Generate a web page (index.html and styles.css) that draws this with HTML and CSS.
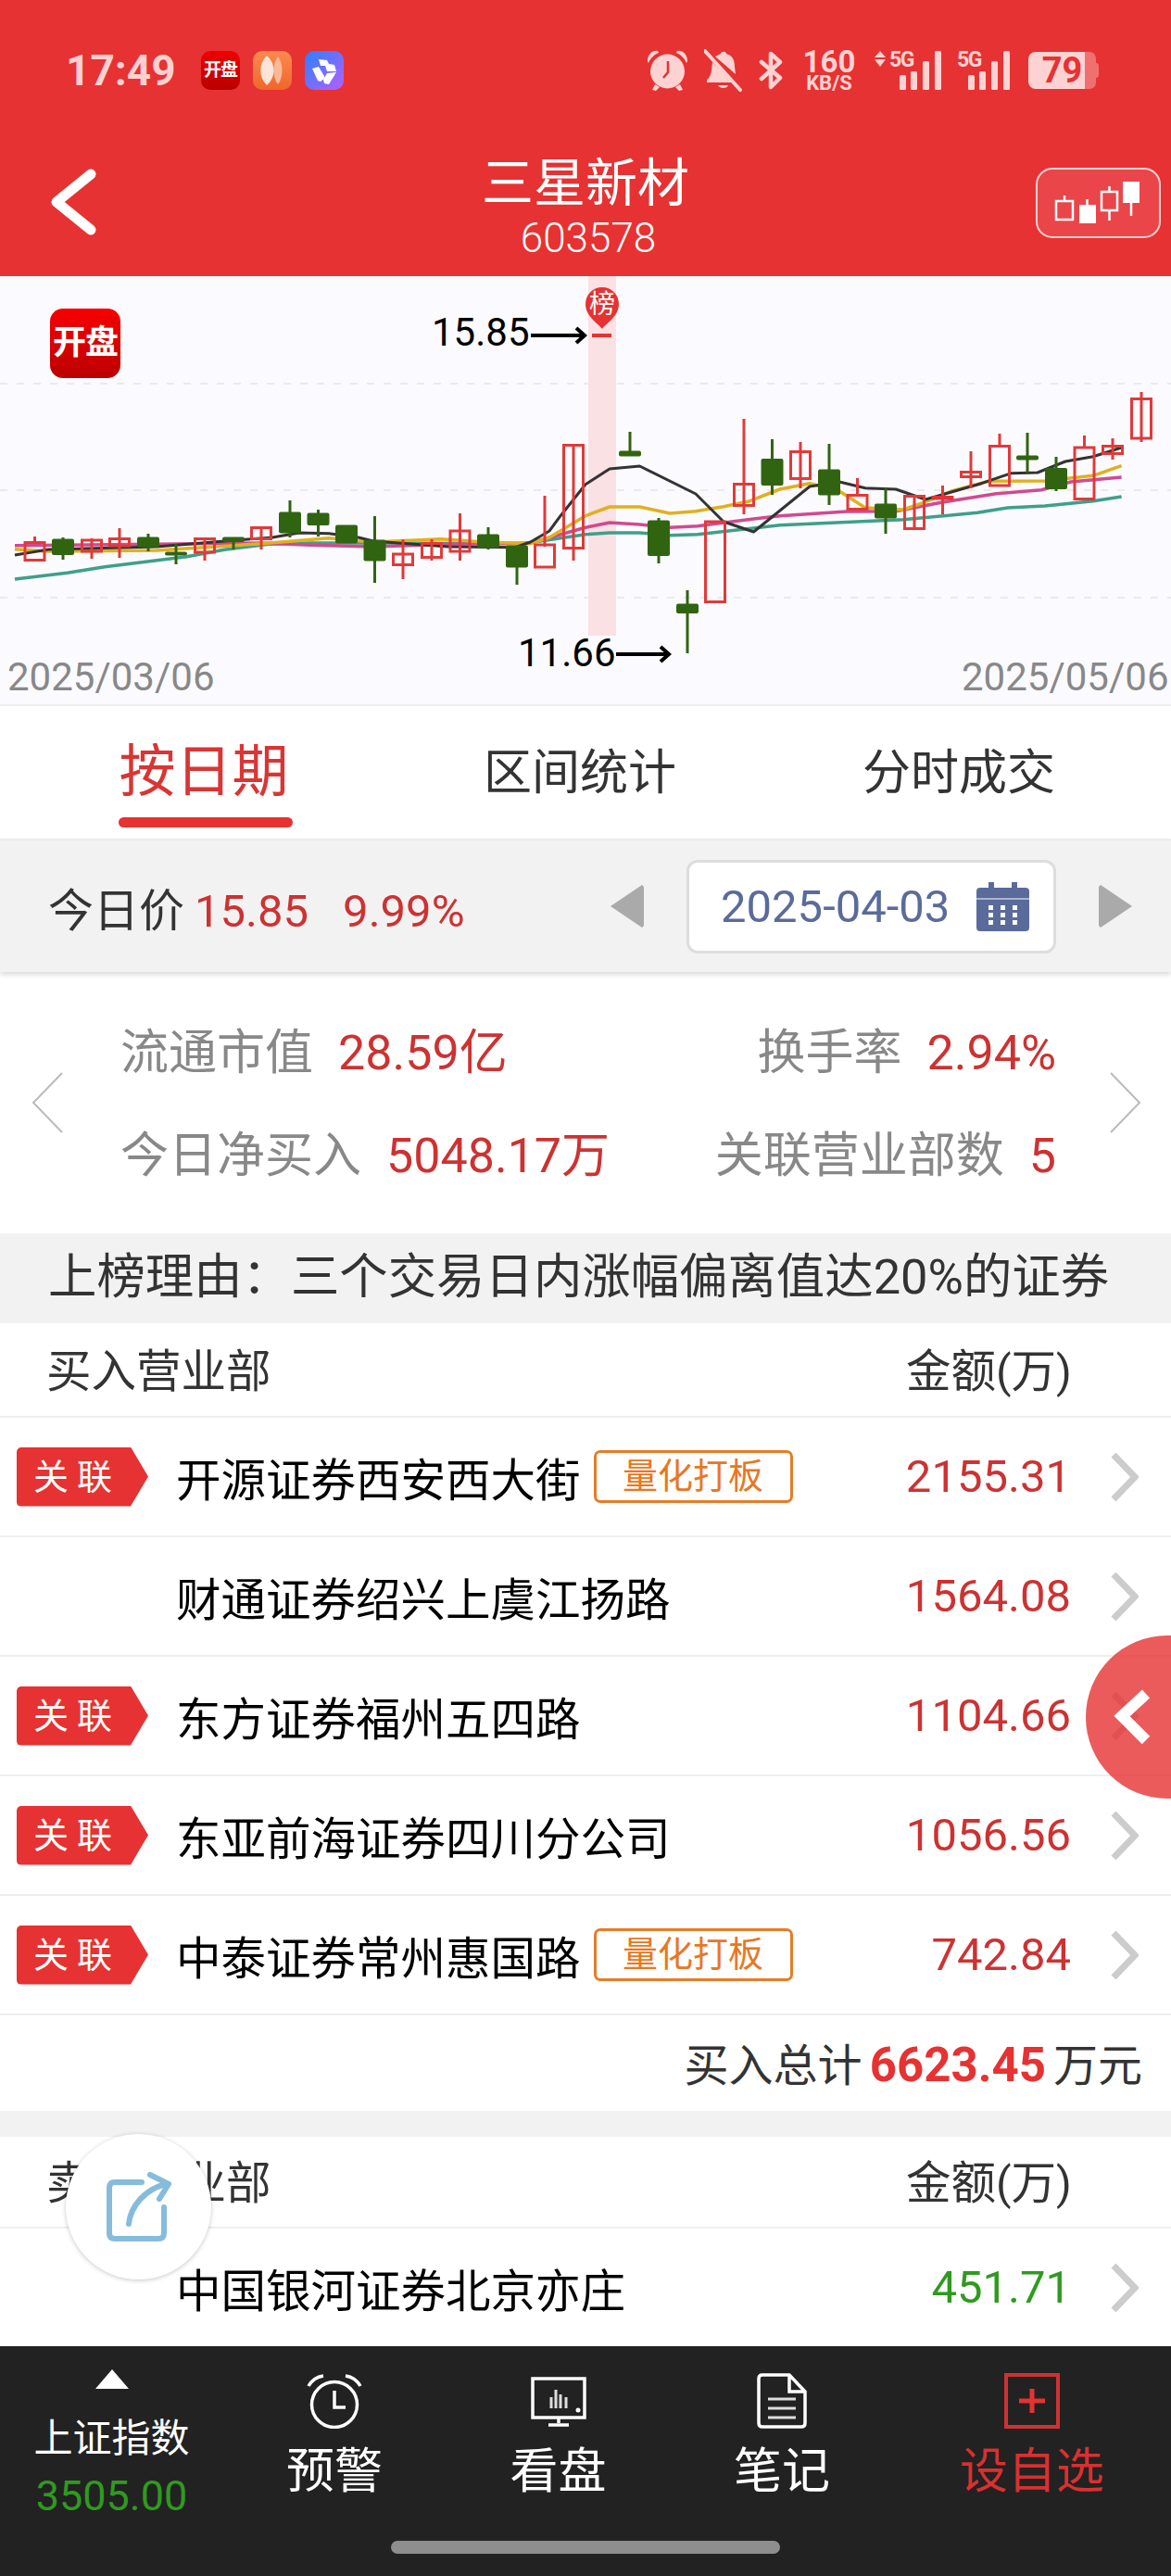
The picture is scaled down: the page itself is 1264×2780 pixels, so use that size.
FILE: index.html
```html
<!DOCTYPE html>
<html lang="zh">
<head>
<meta charset="utf-8">
<title>三星新材</title>
<link rel="stylesheet" href="styles.css">
</head>
<body>
<div class="page">
  <header class="header">
    <div class="status">
      <span class="time">17:49</span>
      <div class="app-icons">
        <span class="app app-kp">开盘</span>
        <span class="app app-orange">
          <svg width="42" height="42" viewBox="0 0 42 42"><path class="petal-b" d="M27 6C33 13 33 29 27 36C21 29 21 13 27 6Z"/><path class="petal-a" d="M15 5C25 14 25 28 15 37C6 28 6 14 15 5Z"/></svg>
        </span>
        <span class="app app-blue">
          <svg width="42" height="42" viewBox="0 0 42 42"><path class="star" d="M15 9L24 10L26 14L32 15L34 22H24L22 16H17Z"/><path class="star" d="M8 19L15 17L22 29L17 33L14 32Z"/><path class="star" d="M24 24L34 23L26 36L21 35L20 31Z"/></svg>
        </span>
      </div>
      <div class="sys-icons">
        <svg class="ic-alarm" width="45" height="46" viewBox="0 0 45 46"><path class="st-fill" d="M1 13C1 6 6 1 12 2L13 4C8 6 4 10 2 15Z"/><path class="st-fill" d="M44 13C44 6 39 1 33 2L32 4C37 6 41 10 43 15Z"/><circle class="st-fill" cx="22.5" cy="24" r="18.5"/><path class="st-fill" d="M9 38L6 44L10 45L14 41Z"/><path class="st-fill" d="M36 38L39 44L35 45L31 41Z"/><path class="st-hand" d="M23 13V25L18 31"/></svg>
        <svg class="ic-bell" width="42" height="46" viewBox="0 0 42 46"><path class="st-fill" d="M18 5C18 2 24 2 24 5C31 7 33 12 33 19L34 27L12 8C14 7 16 6 18 5Z"/><path class="st-fill" d="M9 14L31 36H3V33C8 30 8 22 9 14Z"/><path class="st-fill" d="M15 39H26C25 43 17 43 15 39Z"/><path class="st-slash" d="M1 2L39 44"/></svg>
        <svg class="ic-bt" width="28" height="46" viewBox="0 0 28 46"><path class="st-line" d="M3 14L23 31L13 41V5L23 14L3 32"/></svg>
        <div class="speed"><span class="speed-num">160</span><span class="speed-unit">KB/S</span></div>
        <svg class="ic-sig1" width="72" height="52" viewBox="0 -8 72 52"><path class="st-fill" d="M6 1L12 8H0Z"/><path class="st-fill" d="M0 10H12L6 18Z"/><text class="st-5g" x="16" y="18">5G</text><rect class="st-fill" x="27" y="27" width="7" height="16" rx="1.5"/><rect class="st-fill" x="39" y="23" width="7" height="20" rx="1.5"/><rect class="st-fill" x="52" y="12" width="7" height="31" rx="1.5"/><rect class="st-fill" x="65" y="1" width="7" height="42" rx="1.5"/></svg>
        <svg class="ic-sig2" width="58" height="52" viewBox="0 -8 58 52"><text class="st-5g" x="0" y="18">5G</text><rect class="st-fill" x="12" y="27" width="7" height="16" rx="1.5"/><rect class="st-fill" x="24" y="23" width="7" height="20" rx="1.5"/><rect class="st-fill" x="37" y="12" width="7" height="31" rx="1.5"/><rect class="st-fill" x="50" y="1" width="7" height="42" rx="1.5"/></svg>
        <div class="battery"><span class="batt-num">79</span><span class="batt-rest"></span><span class="batt-nub"></span></div>
      </div>
    </div>
    <div class="titlebar">
      <svg class="back" width="50" height="72" viewBox="0 0 50 72"><path d="M44 6L7 36L44 66"/></svg>
      <div class="title-block">
        <div class="title">三星新材</div>
        <div class="code">603578</div>
      </div>
      <div class="kbtn">
        <svg width="131" height="72" viewBox="0 0 131 72"><path class="k-line" d="M20 34H38V54H20ZM29 34V28M53.500 32V38M69 24H86V44H69ZM77.500 24V18M77.500 44V55M101 36V50"/><rect class="k-solid" x="45" y="38" width="18" height="20"/><rect class="k-solid" x="92" y="13" width="18" height="23"/></svg>
      </div>
    </div>
  </header>

  <section class="chart">
    <svg class="chart-svg" width="1264" height="462" viewBox="0 298 1264 462">
      <path class="grid" d="M0 414H1264M0 529H1264M0 645H1264"/>
      <rect class="band" x="635" y="298" width="30" height="388"/>
      <polyline class="ma ma-teal" points="16,625 72.600,618.300 113,611.700 201.600,600.700 242,593.300 290,587.300 335,586 403,586 564.500,586.700 632,576.700 658,575 690.500,575 723,577.700 753,576.700 841.700,566.700 975,560.700 1055,553.300 1087.600,548 1128,546 1180,540.700 1210.600,536"/>
      <polyline class="ma ma-pink" points="16,588.700 169,587.300 282,586 335,588.300 403,590 484,587.300 572.600,586 632,569.300 658,564 690.500,566 723,569.300 753,567.700 813.500,560 841.700,556.700 914,552 967,551.700 1019,541.700 1075.500,532.700 1124,528.700 1156,520 1210.600,515"/>
      <polyline class="ma ma-yellow" points="16,592.700 52,595 169,594 282,586.700 355,580.700 403,585 476,581.700 524,585 572.600,586.700 593,580 632,556.700 658,547 690.500,547 723,554 751,551.700 781,546.700 809.400,540.700 841.700,528 874,521.700 906,530 934,548 975,550 999,541.700 1027,530 1067.500,519.300 1128,519 1180,513.300 1210.600,502.700"/>
      <polyline class="ma ma-black" points="16,599 52,593 169,590 242,584 294,580 323,575 355,575.700 387,580 403,584 484,590 556,590.700 572.600,585 593,573 605,556.700 632,522.700 658,506 690.500,503 751,533 781,563 813.500,574 874,525 906,520 934,526.700 967,528 999,539 1059.400,521.700 1091.700,510.700 1120,510 1150,498 1180,492.700 1210.600,483"/>
      <path class="wick-r" d="M37.500 579V585M99 581V603M129 570V602M221 580V605M282 568V593M435 582V625M466 582V605M496.500 554V605M588 535V590M619 479V605M803 452V555M864 477V527M925.500 516V535M987 534V572M1017.500 524V555M1048 487V527M1079 468V482M1170.500 470V483M1201 473V496M1232 423V477"/>
      <path class="wick-g" d="M68 580V604M160 576V595M190 587V609M252 580V593M313 540V580M343.500 550V579M404.500 557V629M527 569V593M558 589V631M680 466V488M711 559V608M742 637V705M833.500 474V534M895 479V545M956 527V576M1109 467V510M1140 493V530"/>
      <g class="body-r">
        <rect x="27" y="585.500" width="21" height="19"/><rect x="88.500" y="583" width="21" height="12"/><rect x="118.500" y="581.500" width="21" height="7.500"/><rect x="210.500" y="581.500" width="21" height="14.500"/><rect x="271.500" y="569.500" width="21" height="12"/><rect x="424.500" y="598" width="21" height="11.500"/><rect x="455.500" y="586.500" width="21" height="15"/><rect x="486" y="573" width="21" height="22"/><rect x="577.500" y="588" width="21" height="24"/><rect x="608.500" y="480.500" width="21" height="111"/>
        <rect x="761.500" y="563" width="21" height="86.500"/><rect x="792.500" y="522.500" width="21" height="23"/><rect x="853.500" y="487.500" width="21" height="29"/><rect x="915" y="534.500" width="21" height="15"/><rect x="976.500" y="535.500" width="21" height="35"/><rect x="1037.500" y="509.500" width="21" height="5"/><rect x="1068.500" y="481.500" width="21" height="42.500"/><rect x="1160" y="483" width="21" height="55.500"/><rect x="1190.500" y="481.500" width="21" height="8"/><rect x="1221.500" y="430.500" width="21" height="42.500"/>
      </g>
      <g class="body-g">
        <rect x="56" y="581.500" width="24" height="17.500" rx="2"/><rect x="148" y="579.500" width="24" height="11" rx="2"/><rect x="178" y="595.500" width="24" height="4" rx="2"/><rect x="240" y="579.500" width="24" height="5.500" rx="2"/><rect x="301" y="552.500" width="24" height="23" rx="2"/><rect x="331.500" y="553.500" width="24" height="13.500" rx="2"/><rect x="362" y="566.500" width="24" height="20" rx="2"/><rect x="392.500" y="582.500" width="24" height="23" rx="2"/><rect x="515" y="576.500" width="24" height="15" rx="2"/><rect x="546" y="588.500" width="24" height="24" rx="2"/>
        <rect x="668" y="486.500" width="24" height="6" rx="2"/><rect x="699" y="561.500" width="24" height="38.500" rx="2"/><rect x="730" y="651.500" width="24" height="10.500" rx="2"/><rect x="821.500" y="495" width="24" height="29" rx="2"/><rect x="883" y="506.500" width="24" height="28" rx="2"/><rect x="944" y="543.500" width="24" height="16" rx="2"/><rect x="1097" y="491.500" width="24" height="5" rx="2"/><rect x="1128" y="505" width="24" height="23" rx="2"/>
      </g>
      <rect class="flat-r" x="1005.500" y="535" width="24" height="4.500" rx="1"/>
      <rect class="flat-r" x="639" y="360" width="21" height="4"/>
      <path class="pin" d="M650 355C646 349 632 342 632 328A18 18 0 0 1 668 328C668 342 654 349 650 355Z"/>
      <text class="pin-text" x="650" y="338">榜</text>
      <text class="price-text" x="466" y="373">15.85</text>
      <path class="arrow" d="M573 362H631M622 354L631 362L622 370"/>
      <text class="price-text" x="559" y="719">11.66</text>
      <path class="arrow" d="M665 706H722M713 698L722 706L713 714"/>
      <text class="axis-text" x="8" y="745">2025/03/06</text>
      <text class="axis-text" x="1038" y="745">2025/05/06</text>
    </svg>
    <div class="chart-logo">开盘</div>
  </section>

  <nav class="tabs">
    <div class="tab tab-on">按日期</div>
    <div class="tab">区间统计</div>
    <div class="tab">分时成交</div>
  </nav>

  <section class="pricebar">
    <div class="today"><span class="today-label">今日价</span><span class="red today-val">15.85</span><span class="red today-pct">9.99%</span></div>
    <div class="picker">
      <svg class="tri" width="36" height="46" viewBox="0 0 36 46"><path d="M36 2V44L34 46L0 23L34 0Z"/></svg>
      <div class="datebox">
        <span class="date">2025-04-03</span>
        <svg width="57" height="53" viewBox="0 0 57 53"><rect class="cal" x="0" y="6" width="57" height="47" rx="4"/><path class="cal-line" d="M0 18H57"/><rect class="cal" x="13" y="0" width="6" height="15"/><rect class="cal" x="38" y="0" width="6" height="15"/><g class="cal-dots"><rect x="13" y="25" width="5" height="5"/><rect x="26" y="25" width="5" height="5"/><rect x="39" y="25" width="5" height="5"/><rect x="13" y="33" width="5" height="5"/><rect x="26" y="33" width="5" height="5"/><rect x="39" y="33" width="5" height="5"/><rect x="13" y="41" width="5" height="5"/><rect x="26" y="41" width="5" height="5"/><rect x="39" y="41" width="5" height="5"/></g></svg>
      </div>
      <svg class="tri" width="36" height="46" viewBox="0 0 36 46"><path d="M0 2V44L2 46L36 23L2 0Z"/></svg>
    </div>
  </section>

  <section class="stats">
    <svg class="thin" width="34" height="66" viewBox="0 0 34 66"><path d="M33 1L2 33L33 65"/></svg>
    <div class="stat-grid">
      <div class="stat-row">
        <div class="stat"><span class="stat-label">流通市值</span><span class="red">28.59亿</span></div>
        <div class="stat"><span class="stat-label">换手率</span><span class="red">2.94%</span></div>
      </div>
      <div class="stat-row">
        <div class="stat"><span class="stat-label">今日净买入</span><span class="red">5048.17万</span></div>
        <div class="stat"><span class="stat-label">关联营业部数</span><span class="red">5</span></div>
      </div>
    </div>
    <svg class="thin" width="34" height="66" viewBox="0 0 34 66"><path d="M1 1L32 33L1 65"/></svg>
  </section>

  <div class="reason">上榜理由：三个交易日内涨幅偏离值达20%的证券</div>

  <div class="thead"><span>买入营业部</span><span>金额(万)</span></div>
  <div class="row">
    <span class="rel">关联</span><span class="name">开源证券西安西大街</span><span class="qtag">量化打板</span><span class="amt red">2155.31</span>
    <svg class="more" width="30" height="52" viewBox="0 0 30 52"><path d="M3 2L26 26L3 50"/></svg>
  </div>
  <div class="row">
    <span class="rel rel-none"></span><span class="name">财通证券绍兴上虞江扬路</span><span class="amt red">1564.08</span>
    <svg class="more" width="30" height="52" viewBox="0 0 30 52"><path d="M3 2L26 26L3 50"/></svg>
  </div>
  <div class="row">
    <span class="rel">关联</span><span class="name">东方证券福州五四路</span><span class="amt red">1104.66</span>
    <svg class="more" width="30" height="52" viewBox="0 0 30 52"><path d="M3 2L26 26L3 50"/></svg>
  </div>
  <div class="row">
    <span class="rel">关联</span><span class="name">东亚前海证券四川分公司</span><span class="amt red">1056.56</span>
    <svg class="more" width="30" height="52" viewBox="0 0 30 52"><path d="M3 2L26 26L3 50"/></svg>
  </div>
  <div class="row">
    <span class="rel">关联</span><span class="name">中泰证券常州惠国路</span><span class="qtag">量化打板</span><span class="amt red">742.84</span>
    <svg class="more" width="30" height="52" viewBox="0 0 30 52"><path d="M3 2L26 26L3 50"/></svg>
  </div>
  <div class="total"><span>买入总计</span><b class="total-num">6623.45</b><span>万元</span></div>
  <div class="gap"></div>
  <div class="thead thead-2"><span>卖出营业部</span><span>金额(万)</span></div>
  <div class="row row-last">
    <span class="rel rel-none"></span><span class="name">中国银河证券北京亦庄</span><span class="amt green">451.71</span>
    <svg class="more" width="30" height="52" viewBox="0 0 30 52"><path d="M3 2L26 26L3 50"/></svg>
  </div>

  <footer class="bottom">
    <div class="bottom-grid">
      <div class="nav-item nav-index">
        <span class="up"></span>
        <span class="idx-name">上证指数</span>
        <span class="idx-val">3505.00</span>
      </div>
      <div class="nav-item">
        <svg class="nav-ic" width="60" height="60" viewBox="0 0 60 60"><circle class="n-line" cx="30" cy="34" r="24.500"/><path class="n-line" d="M30 19V37H42"/><path class="n-line" d="M2 14C6 7 11 4 18 3M58 14C54 7 49 4 42 3"/></svg>
        <span class="nav-label">预警</span>
      </div>
      <div class="nav-item">
        <svg class="nav-ic" width="60" height="60" viewBox="0 0 60 60"><rect class="n-line" x="2" y="6" width="56" height="42"/><path class="n-line" d="M30 48V54M19 56H41"/><path class="n-thin" d="M22 38V26M27 38V18M32 38V23M38 38V26"/><circle class="n-dot" cx="51" cy="40" r="2.500"/></svg>
        <span class="nav-label">看盘</span>
      </div>
      <div class="nav-item">
        <svg class="nav-ic" width="54" height="60" viewBox="0 0 54 60"><path class="n-line" d="M6 2H35L52 20V54Q52 58 48 58H6Q2 58 2 54V6Q2 2 6 2ZM35 2V20H52"/><path class="n-thin" d="M12 28H42M12 38H42M12 48H42"/></svg>
        <span class="nav-label">笔记</span>
      </div>
      <div class="nav-item">
        <svg class="nav-ic" width="60" height="60" viewBox="0 0 60 60"><rect class="p-box" x="2" y="2" width="56" height="56"/><path class="p-plus" d="M30 17V43M16 30H44"/></svg>
        <span class="nav-label nav-red">设自选</span>
      </div>
    </div>
    <div class="home-bar"></div>
  </footer>

  <div class="float-red">
    <svg width="60" height="70" viewBox="0 0 60 70"><path d="M36 10L10 34L36 60"/></svg>
  </div>
  <div class="float-share">
    <svg width="157" height="157" viewBox="0 0 157 157"><path d="M82 52H53Q47 52 47 58V107Q47 113 53 113H100Q106 113 106 107V79"/><path d="M68 97C70 78 85 60 108 54"/><path d="M91 44L111 54L101 70"/></svg>
  </div>
</div>
</body>
</html>
```
FILE: styles.css
```css
* { box-sizing: border-box; }
html, body { margin: 0; padding: 0; background: #fff; }
body { font-family: Roboto, "Noto Sans CJK SC", sans-serif; color: #333; }
.page { position: relative; width: 1264px; height: 2780px; overflow: hidden; background: #fff; }
svg { display: block; }

.red { color: #cd3232; }
.green { color: #2f9a1f; }

/* header */
.header { height: 298px; background: #e63232; color: #fff; }
.status { height: 152px; display: flex; align-items: center; padding: 0 78px 0 71px; }
.time { font-size: 46px; font-weight: 700; color: #fcd0d0; width: 117px; white-space: nowrap; }
.app-icons { display: flex; gap: 14px; margin-left: 29px; }
.app { width: 42px; height: 42px; border-radius: 10px; display: block; overflow: hidden; }
.app-kp { background: linear-gradient(#f00000, #b80000); color: #fff; font-size: 19px; font-weight: 700; line-height: 42px; text-align: center; letter-spacing: -1px; white-space: nowrap; }
.app-orange { background: linear-gradient(#fb8a50, #f0662b); }
.app-blue { background: linear-gradient(135deg, #2b80ff, #b45fff); }
.petal-a { fill: #fde4d8; }
.petal-b { fill: #f9b898; }
.star { fill: #fff; }
.sys-icons { margin-left: auto; display: flex; align-items: center; }
.ic-alarm { margin-right: 17px; }
.ic-bell { margin-right: 17px; }
.ic-bt { margin-right: 20px; }
.st-fill { fill: #fdd2d2; }
.st-hand { fill: none; stroke: #e63232; stroke-width: 2.500; }
.st-slash { fill: none; stroke: #fdd2d2; stroke-width: 4; stroke-linecap: round; }
.st-line { fill: none; stroke: #fdd2d2; stroke-width: 4.500; stroke-linejoin: round; stroke-linecap: round; }
.st-5g { fill: #fdd2d2; font-size: 23px; font-weight: 700; letter-spacing: -1.500px; font-family: Roboto, sans-serif; }
.speed { display: flex; flex-direction: column; align-items: center; width: 56px; color: #fdd2d2; margin-right: 21px; }
.speed-num { font-size: 33px; font-weight: 700; line-height: 27px; }
.speed-unit { font-size: 22px; font-weight: 700; line-height: 19px; }
.ic-sig1 { margin: -8px 17px 0 0; }
.ic-sig2 { margin: -8px 19px 0 0; }
.battery { position: relative; width: 61px; height: 40px; margin-right: 15px; background: #fdd2d2; border-radius: 8px 0 0 8px; text-align: center; }
.batt-num { position: relative; left: 6px; font-size: 38px; font-weight: 700; line-height: 40px; color: #e63232; }
.batt-rest { position: absolute; left: 61px; top: 0; width: 12px; height: 40px; background: #f07070; border-radius: 0 7px 7px 0; }
.batt-nub { position: absolute; left: 73px; top: 12px; width: 3px; height: 16px; background: #f07070; border-radius: 0 3px 3px 0; }

.titlebar { height: 146px; display: grid; grid-template-columns: 1fr auto 1fr; align-items: start; }
.back { margin: 30px 0 0 54px; }
.back path { fill: none; stroke: #fff; stroke-width: 11; stroke-linecap: round; stroke-linejoin: round; }
.title-block { text-align: center; padding-top: 15px; }
.title { font-size: 56px; line-height: 62px; }
.code { font-size: 44px; line-height: 50px; margin: 3px 0 0 6px; font-weight: 300; }
.kbtn { justify-self: end; margin: 29px 11px 0 0; width: 135px; height: 76px; border: 2px solid #fbcfcf; border-radius: 18px; background: #ea4549; }
.k-line { fill: none; stroke: #fff; stroke-width: 2.500; }
.k-solid { fill: #fff; }

/* chart */
.chart { position: relative; height: 464px; background: #fbfbff; border-bottom: 2px solid #eee; }
.chart-svg { position: absolute; left: 0; top: 0; }
.grid { fill: none; stroke: #d9d9d9; stroke-width: 1; stroke-dasharray: 8 10; }
.band { fill: #f9e1e4; }
.ma { fill: none; stroke-width: 3.500; stroke-linejoin: round; }
.ma-black { stroke: #333; stroke-width: 3; }
.ma-yellow { stroke: #e0b020; }
.ma-pink { stroke: #d04a90; }
.ma-teal { stroke: #3f9f8a; }
.wick-r { fill: none; stroke: #e03a3a; stroke-width: 3; }
.wick-g { fill: none; stroke: #316411; stroke-width: 3; }
.body-r rect { fill: none; stroke: #e03a3a; stroke-width: 3; }
.body-g rect { fill: #316411; }
.flat-r { fill: #e63232; }
.pin { fill: #e63232; }
.pin-text { fill: #fff; font-size: 28px; text-anchor: middle; font-family: "Noto Sans CJK SC", sans-serif; }
.price-text { fill: #000; font-size: 42px; font-family: Roboto, sans-serif; }
.axis-text { fill: #888; font-size: 42px; font-family: Roboto, sans-serif; }
.arrow { fill: none; stroke: #000; stroke-width: 4; }
.chart-logo { position: absolute; left: 54px; top: 35px; width: 76px; height: 75px; border-radius: 14px; background: linear-gradient(#f80000, #bb0000); color: #fff; font-size: 36px; font-weight: 700; line-height: 75px; text-align: center; letter-spacing: -1px; white-space: nowrap; }

/* tabs */
.tabs { height: 143px; display: grid; grid-template-columns: 440px 372px 446px; background: #fff; }
.tab { font-size: 52px; line-height: 60px; padding-top: 43px; text-align: center; color: #333; white-space: nowrap; position: relative; }
.tab-on { font-size: 61px; color: #d93535; padding-top: 41px; }
.tab-on::after { content: ""; position: absolute; left: 128px; top: 120px; width: 188px; height: 11px; border-radius: 6px; background: #e63232; }

/* price bar */
.pricebar { position: relative; z-index: 1; height: 144px; background: #f2f2f2; border-top: 2px solid #ececec; box-shadow: 0 3px 5px rgba(0,0,0,.14); display: flex; align-items: center; justify-content: space-between; padding: 0 42px 0 52px; }
.today { font-size: 49px; white-space: nowrap; display: flex; align-items: baseline; }
.today-label { color: #333; }
.today-val { margin-left: 11px; }
.today-pct { margin-left: 37px; }
.picker { display: flex; align-items: center; gap: 46px; }
.tri path { fill: #aaa; }
.datebox { width: 399px; height: 101px; background: #fff; border: 3px solid #ddd; border-radius: 12px; display: flex; align-items: center; justify-content: space-between; padding: 0 26px 0 34px; }
.date { font-size: 49px; color: #5a6b9b; white-space: nowrap; }
.cal { fill: #5a6b9b; }
.cal-line { stroke: #fff; stroke-width: 1; fill: none; }
.cal-dots rect { fill: #fff; }

/* stats */
.stats { height: 282px; display: flex; align-items: center; padding: 0 32px 0 34px; background: #fff; }
.thin path { fill: none; stroke: #bbb; stroke-width: 2; }
.stat-grid { flex: 1; margin: 0 58px 0 62px; padding-bottom: 6px; }
.stat-row { height: 111px; display: flex; align-items: center; justify-content: space-between; }
.stat { display: flex; align-items: baseline; gap: 27px; font-size: 52px; white-space: nowrap; }
.stat-label { color: #888; }

/* reason */
.reason { height: 97px; background: #f2f2f2; font-size: 52.400px; line-height: 94px; padding-left: 52px; color: #333; white-space: nowrap; }

/* table */
.thead { height: 102px; display: flex; align-items: center; justify-content: space-between; padding: 0 107px 4px 50px; font-size: 48.500px; color: #333; border-bottom: 2px solid #eee; }
.thead-2 { height: 99px; padding-bottom: 6px; }
.row { height: 129px; display: flex; align-items: center; padding: 0 35px 0 18px; border-bottom: 2px solid #eee; white-space: nowrap; }
.row-last { height: 127px; border-bottom: 0; }
.rel { width: 142px; height: 64px; margin-right: 30px; flex: none; background: #e63232; color: #fff; font-size: 38px; line-height: 64px; letter-spacing: 9px; padding-left: 18px; border-radius: 5px; clip-path: polygon(0 0, 123px 0, 100% 50%, 123px 100%, 0 100%); }
.rel-none { background: transparent; }
.name { font-size: 48.500px; color: #000; }
.qtag { margin-left: 14px; width: 215px; height: 57px; border: 3px solid #e67c28; border-radius: 7px; color: #e87722; font-size: 38px; line-height: 51px; text-align: center; }
.amt { margin-left: auto; font-size: 49px; }
.more { margin-left: 43px; }
.more path { fill: none; stroke: #ccc; stroke-width: 7; }
.total { height: 103px; display: flex; align-items: baseline; justify-content: flex-end; gap: 8px; padding: 15px 31px 0 0; font-size: 48px; color: #333; white-space: nowrap; }
.total-num { color: #e63232; font-weight: 700; font-size: 51px; }
.gap { height: 28px; background: #f2f2f2; }

/* bottom */
.bottom { height: 249px; background: #222; }
.bottom-grid { height: 210px; display: grid; grid-template-columns: 241px 240px 243px 240px 300px; }
.nav-item { display: flex; flex-direction: column; align-items: center; padding-top: 29px; }
.nav-ic { height: 60px; }
.nav-label { font-size: 52px; line-height: 60px; color: #fff; margin-top: 17px; white-space: nowrap; }
.nav-red { color: #d93030; }
.nav-index { padding-top: 25px; }
.up { width: 0; height: 0; border-left: 18px solid transparent; border-right: 18px solid transparent; border-bottom: 21px solid #fff; }
.idx-name { font-size: 42px; line-height: 46px; margin-top: 31px; color: #fff; white-space: nowrap; }
.idx-val { font-size: 45px; line-height: 46px; margin-top: 16px; color: #2f9a1f; }
.n-line { fill: none; stroke: #fff; stroke-width: 3.500; }
.n-thin { fill: none; stroke: #ddd; stroke-width: 3; }
.n-dot { fill: #fff; }
.p-box { fill: none; stroke: #cc3333; stroke-width: 4; }
.p-plus { fill: none; stroke: #e63232; stroke-width: 5; }
.home-bar { width: 420px; height: 14px; margin: 0 auto; background: #8e8e8e; border-radius: 7px; }

/* floating */
.float-red { position: absolute; left: 1172px; top: 1765px; width: 176px; height: 176px; border-radius: 50%; background: rgba(230, 50, 50, .8); padding: 53px 0 0 29px; }
.float-red path { fill: none; stroke: #fff; stroke-width: 12; }
.float-share { position: absolute; left: 71px; top: 2303px; width: 157px; height: 157px; border-radius: 50%; background: #fff; box-shadow: 0 1px 5px rgba(0,0,0,.22); }
.float-share path { fill: none; stroke: #85bcdb; stroke-width: 6; stroke-linecap: round; stroke-linejoin: round; }
```
